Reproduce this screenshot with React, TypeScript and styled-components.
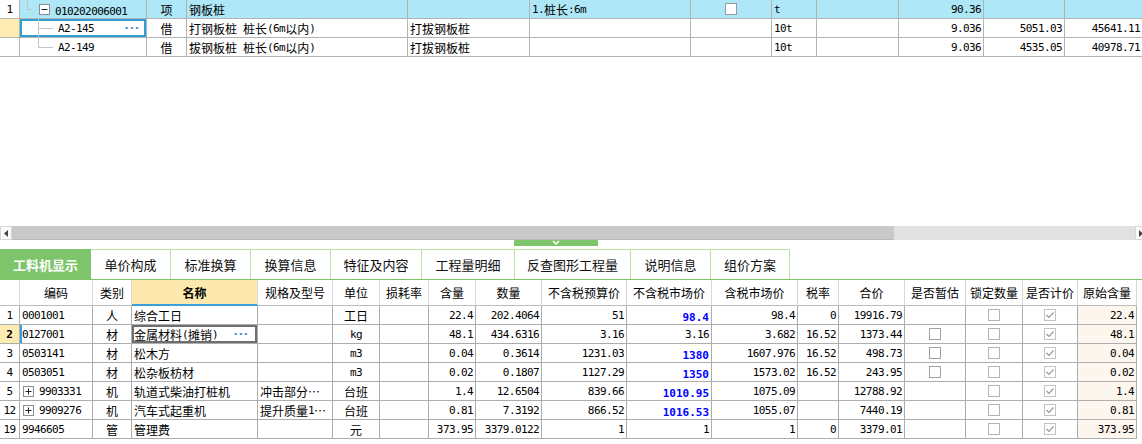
import React from 'react'
import styled, { createGlobalStyle, css } from 'styled-components'

const GlobalStyle = createGlobalStyle`
  html, body {
    margin: 0;
    padding: 0;
    background: #fff;
  }
  body {
    font-family: "Noto Sans CJK SC", "Noto Sans", sans-serif;
    font-size: 12px;
    color: #000;
  }
`

type Align = 'left' | 'center' | 'right'
const just = (a?: Align) => (a === 'center' ? 'center' : a === 'right' ? 'flex-end' : 'flex-start')

const Page = styled.div`
  width: 1142px;
  height: 444px;
  overflow: hidden;
  display: flex;
  flex-direction: column;
`

const Latin = styled.span<{ $bold?: boolean }>`
  font-family: "DejaVu Sans Mono", "Liberation Mono", monospace;
  font-size: 11px;
  letter-spacing: ${p => (p.$bold ? '0' : '-0.6px')};
  font-weight: ${p => (p.$bold ? 'bold' : 'normal')};
  white-space: pre;
`

const rich = (s: string, bold?: boolean) =>
  s
    .split(/([\x20-\x7e]+)/)
    .filter(Boolean)
    .map((p, i) =>
      /^[\x20-\x7e]+$/.test(p) ? (
        <Latin key={i} $bold={bold}>
          {p}
        </Latin>
      ) : (
        <React.Fragment key={i}>{p}</React.Fragment>
      )
    )

/* ---------- upper grid ---------- */

const TopPane = styled.div`
  height: 226px;
  overflow: hidden;
`

const TopRow = styled.div<{ $hl?: boolean }>`
  display: grid;
  grid-template-columns: 20px 127px 40px 221px 122px 161px 81px 45px 82px 85px 81px 78px;
  background: ${p => (p.$hl ? '#ade7f8' : '#fff')};
`

const Cell = styled.div<{ $align?: Align; $bg?: string; $sel?: boolean; $bold?: boolean }>`
  box-sizing: border-box;
  height: 19px;
  border-right: 1px solid #b3b3b3;
  border-bottom: 1px solid #b3b3b3;
  background: ${p => p.$bg ?? 'transparent'};
  display: flex;
  align-items: center;
  justify-content: ${p => just(p.$align)};
  padding: 0 2px;
  white-space: nowrap;
  overflow: hidden;
  font-weight: ${p => (p.$bold ? 'bold' : 'normal')};
  ${p =>
    p.$sel &&
    css`
      box-shadow: inset 0 0 0 2px #2f9fd2;
    `}
`

const Dots = styled.span`
  margin-left: auto;
  margin-right: 6px;
  color: #3d8fd4;
  font-weight: bold;
  letter-spacing: 1px;
  font-family: "DejaVu Sans", sans-serif;
  font-size: 11px;
  line-height: 1;
`

const Glyph = styled.svg`
  flex-shrink: 0;
  display: block;
`

const ToggleBox = ({ plus }: { plus?: boolean }) => (
  <Glyph width="11" height="11" viewBox="0 0 11 11">
    <rect x="0.5" y="0.5" width="10" height="10" fill="#fff" stroke="#8c8c8c" />
    <line x1="2.5" y1="5.5" x2="8.5" y2="5.5" stroke="#222" />
    {plus && <line x1="5.5" y1="2.5" x2="5.5" y2="8.5" stroke="#222" />}
  </Glyph>
)

const TreeLine = ({ last }: { last?: boolean }) => (
  <Glyph width="18" height="18" viewBox="0 0 18 18" style={{ marginLeft: 17, marginRight: 3, alignSelf: 'flex-start' }}>
    <line x1="1.5" y1="0" x2="1.5" y2={last ? 9.5 : 18} stroke="#c4c4c4" />
    <line x1="1.5" y1="9.5" x2="16" y2="9.5" stroke="#c4c4c4" />
  </Glyph>
)

const ParentLine = () => (
  <Glyph width="13" height="18" viewBox="0 0 13 18" style={{ alignSelf: 'flex-start', marginLeft: 6 }}>
    <line x1="1.5" y1="0" x2="1.5" y2="9.5" stroke="#c4c4c4" />
    <line x1="1.5" y1="9.5" x2="6" y2="9.5" stroke="#c4c4c4" />
  </Glyph>
)

const Check = ({ on, tone = '#a9a9a9' }: { on?: boolean; tone?: string }) => (
  <Glyph width="12" height="12" viewBox="0 0 12 12">
    <rect x="0.5" y="0.5" width="11" height="11" fill="#fff" stroke={on ? '#c3c3c3' : tone} />
    {on && <polyline points="2.5,6 5,8.5 9.5,3.5" fill="none" stroke="#9a9a9a" strokeWidth="1.2" />}
  </Glyph>
)

const TopGrid = () => (
  <TopPane>
    <TopRow $hl>
      <Cell $align="center" $bg="#fff">{rich('1')}</Cell>
      <Cell style={{ padding: 0 }}>
        <ParentLine />
        <ToggleBox />
        <span style={{ marginLeft: 5 }}>{rich('010202006001')}</span>
      </Cell>
      <Cell $align="center">项</Cell>
      <Cell>钢板桩</Cell>
      <Cell />
      <Cell>{rich('1.桩长:6m')}</Cell>
      <Cell $align="center">
        <Check tone="#9a9a9a" />
      </Cell>
      <Cell>{rich('t')}</Cell>
      <Cell />
      <Cell $align="right">{rich('90.36')}</Cell>
      <Cell />
      <Cell />
    </TopRow>
    {[
      ['A2-145', '打钢板桩 桩长(6m以内)', '5051.03', '45641.11'],
      ['A2-149', '拔钢板桩 桩长(6m以内)', '4535.05', '40978.71'],
    ].map(([code, name, price, total], i) => (
      <TopRow key={code}>
        <Cell $bg={i === 0 ? '#fdebb4' : '#fff'} />
        <Cell $sel={i === 0} style={{ padding: 0 }}>
          <TreeLine last={i === 1} />
          {rich(code)}
          {i === 0 && <Dots>···</Dots>}
        </Cell>
        <Cell $align="center">借</Cell>
        <Cell>{rich(name)}</Cell>
        <Cell>打拔钢板桩</Cell>
        <Cell />
        <Cell />
        <Cell>{rich('10t')}</Cell>
        <Cell />
        <Cell $align="right">{rich('9.036')}</Cell>
        <Cell $align="right">{rich(price)}</Cell>
        <Cell $align="right">{rich(total)}</Cell>
      </TopRow>
    ))}
  </TopPane>
)

/* ---------- scrollbar / splitter ---------- */

const HScroll = styled.div`
  width: 1147px;
  height: 14px;
  display: flex;
  background: #e1e1e1;
  flex-shrink: 0;
`

const ScrollBtn = styled.div`
  width: 12px;
  flex-shrink: 0;
  box-sizing: border-box;
  background: #fbfbfb;
  border: 1px solid #d6d6d6;
  display: flex;
  align-items: center;
  justify-content: center;
`

const Thumb = styled.div`
  width: 882px;
  flex-shrink: 0;
  background: #c9c9c9;
  border-bottom: 1px solid #b9b9b9;
  border-radius: 1px;
`

const Track = styled.div`
  flex: 1;
`

const SplitRow = styled.div`
  height: 9px;
  flex-shrink: 0;
`

const Handle = styled.div`
  width: 84px;
  height: 6px;
  margin-left: 514px;
  background: #7ec46b;
  display: flex;
  justify-content: center;
`

/* ---------- tabs ---------- */

const TabBar = styled.div`
  display: flex;
  height: 30px;
  border-bottom: 1px solid #7ec46b;
  flex-shrink: 0;
`

const Tab = styled.div<{ $w: number; $active?: boolean }>`
  box-sizing: border-box;
  width: ${p => p.$w}px;
  height: 30px;
  display: flex;
  align-items: center;
  justify-content: center;
  font-size: 13px;
  ${p =>
    p.$active
      ? css`
          background: #7ec46b;
          color: #fff;
          font-weight: bold;
        `
      : css`
          background: #fff;
          color: #111;
          border-top: 1px solid #b7e4a3;
          border-right: 1px solid #b7e4a3;
        `}
`

const tabs: [string, number][] = [
  ['工料机显示', 91],
  ['单价构成', 80],
  ['标准换算', 80],
  ['换算信息', 80],
  ['特征及内容', 91],
  ['工程量明细', 93],
  ['反查图形工程量', 116],
  ['说明信息', 80],
  ['组价方案', 79],
]

/* ---------- lower table ---------- */

const cols = '20px 73px 39px 126px 75px 47px 49px 47px 66px 85px 85px 86px 41px 66px 61px 57px 55px 59px'

const GridRow = styled.div`
  display: grid;
  grid-template-columns: ${cols};
`

const HCell = styled.div<{ $active?: boolean }>`
  box-sizing: border-box;
  height: 26px;
  display: flex;
  align-items: center;
  justify-content: center;
  white-space: nowrap;
  border-right: 1px solid #d9d9d9;
  border-bottom: 1px solid #bdbdbd;
  ${p =>
    p.$active &&
    css`
      background: #fde9ad;
      font-weight: bold;
      border-bottom: 2px solid #3aa0d8;
    `}
`

const BCell = styled(Cell)<{ $edit?: boolean; $mark?: boolean }>`
  border-right-color: #adadad;
  border-bottom-color: #adadad;
  ${p =>
    p.$edit &&
    css`
      box-shadow: inset 0 0 0 2px #6f6f6f;
    `}
  ${p =>
    p.$mark &&
    css`
      box-shadow: inset 2px 0 0 #3aa0d8;
    `}
`

const heads = ['', '编码', '类别', '名称', '规格及型号', '单位', '损耗率', '含量', '数量', '不含税预算价', '不含税市场价', '含税市场价', '税率', '合价', '是否暂估', '锁定数量', '是否计价', '原始含量']

type Row = {
  n: string
  code: string
  plus?: boolean
  kind: string
  name: string
  spec?: string
  unit: string
  qty: string
  amount: string
  budget: string
  market: string
  blue?: boolean
  taxed: string
  rate: string
  total: string
  est?: boolean
  orig: string
}

const rows: Row[] = [
  { n: '1', code: '0001001', kind: '人', name: '综合工日', unit: '工日', qty: '22.4', amount: '202.4064', budget: '51', market: '98.4', blue: true, taxed: '98.4', rate: '0', total: '19916.79', orig: '22.4' },
  { n: '2', code: '0127001', kind: '材', name: '金属材料(摊销)', unit: 'kg', qty: '48.1', amount: '434.6316', budget: '3.16', market: '3.16', taxed: '3.682', rate: '16.52', total: '1373.44', est: true, orig: '48.1' },
  { n: '3', code: '0503141', kind: '材', name: '松木方', unit: 'm3', qty: '0.04', amount: '0.3614', budget: '1231.03', market: '1380', blue: true, taxed: '1607.976', rate: '16.52', total: '498.73', est: true, orig: '0.04' },
  { n: '4', code: '0503051', kind: '材', name: '松杂板枋材', unit: 'm3', qty: '0.02', amount: '0.1807', budget: '1127.29', market: '1350', blue: true, taxed: '1573.02', rate: '16.52', total: '243.95', est: true, orig: '0.02' },
  { n: '5', code: '9903331', plus: true, kind: '机', name: '轨道式柴油打桩机', spec: '冲击部分…', unit: '台班', qty: '1.4', amount: '12.6504', budget: '839.66', market: '1010.95', blue: true, taxed: '1075.09', rate: '', total: '12788.92', orig: '1.4' },
  { n: '12', code: '9909276', plus: true, kind: '机', name: '汽车式起重机', spec: '提升质量1…', unit: '台班', qty: '0.81', amount: '7.3192', budget: '866.52', market: '1016.53', blue: true, taxed: '1055.07', rate: '', total: '7440.19', orig: '0.81' },
  { n: '19', code: '9946605', kind: '管', name: '管理费', unit: '元', qty: '373.95', amount: '3379.0122', budget: '1', market: '1', taxed: '1', rate: '0', total: '3379.01', orig: '373.95' },
]

const Blue = styled.span`
  color: #0000ff;
`

const DetailTable = () => (
  <div>
    <GridRow>
      {heads.map((h, i) => (
        <HCell key={i} $active={h === '名称'}>
          {h}
        </HCell>
      ))}
    </GridRow>
    {rows.map(r => {
      const sel = r.n === '2'
      return (
        <GridRow key={r.n}>
          <BCell $align="center" $bg={sel ? '#fdebb4' : undefined} $bold={sel}>
            {rich(r.n, sel)}
          </BCell>
          <BCell $mark={sel} style={r.plus ? { paddingLeft: 3 } : undefined}>
            {r.plus && (
              <span style={{ marginRight: 5, display: 'flex' }}>
                <ToggleBox plus />
              </span>
            )}
            {rich(r.code)}
          </BCell>
          <BCell $align="center">{r.kind}</BCell>
          <BCell $edit={sel}>
            {rich(r.name)}
            {sel && <Dots>···</Dots>}
          </BCell>
          <BCell>{r.spec ? rich(r.spec) : null}</BCell>
          <BCell $align="center">{rich(r.unit)}</BCell>
          <BCell />
          <BCell $align="right">{rich(r.qty)}</BCell>
          <BCell $align="right">{rich(r.amount)}</BCell>
          <BCell $align="right">{rich(r.budget)}</BCell>
          <BCell $align="right">{r.blue ? <Blue>{rich(r.market, true)}</Blue> : rich(r.market)}</BCell>
          <BCell $align="right">{rich(r.taxed)}</BCell>
          <BCell $align="right">{rich(r.rate)}</BCell>
          <BCell $align="right">{rich(r.total)}</BCell>
          <BCell $align="center">{r.est && <Check tone="#a0a0a0" />}</BCell>
          <BCell $align="center">
            <Check tone="#b4b4b4" />
          </BCell>
          <BCell $align="center">
            <Check on />
          </BCell>
          <BCell $align="right" $bg="#fdf6ee">
            {rich(r.orig)}
          </BCell>
        </GridRow>
      )
    })}
  </div>
)

export default function App() {
  return (
    <>
      <GlobalStyle />
      <Page>
        <TopGrid />
        <HScroll>
          <ScrollBtn>
            <svg width="4" height="7" viewBox="0 0 4 7">
              <polygon points="4,0 0,3.5 4,7" fill="#444" />
            </svg>
          </ScrollBtn>
          <Thumb />
          <Track />
          <ScrollBtn>
            <svg width="4" height="7" viewBox="0 0 4 7">
              <polygon points="0,0 4,3.5 0,7" fill="#444" />
            </svg>
          </ScrollBtn>
        </HScroll>
        <SplitRow>
          <Handle>
            <svg width="10" height="6" viewBox="0 0 10 6">
              <polyline points="2,1 5,4 8,1" fill="none" stroke="#fff" strokeWidth="1.5" />
            </svg>
          </Handle>
        </SplitRow>
        <TabBar>
          {tabs.map(([t, w], i) => (
            <Tab key={t} $w={w} $active={i === 0}>
              {t}
            </Tab>
          ))}
        </TabBar>
        <DetailTable />
      </Page>
    </>
  )
}
